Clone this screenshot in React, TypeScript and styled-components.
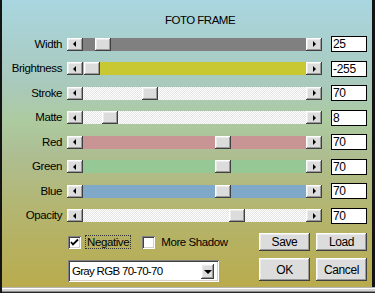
import React from 'react';
import styled, { createGlobalStyle } from 'styled-components';

const FONT = '"Liberation Sans", Arial, sans-serif';

const Global = createGlobalStyle`
  html, body { margin: 0; padding: 0; background: #fff; }
  body { font-family: ${FONT}; letter-spacing: -0.4px; }
  * { box-sizing: border-box; }
`;

const raised = `
  background: #dcdcdc;
  box-shadow: inset -1px -1px #404040, inset 1px 1px #ffffff, inset -2px -2px #9a9a9a, inset 2px 2px #ececec;
`;

const Frame = styled.div`
  width: 375px;
  height: 293px;
  display: flex;
  flex-direction: column;
  background: #141414;
`;

const Panel = styled.div`
  flex: 1;
  margin: 0 3px 0 2px;
  display: flex;
  flex-direction: column;
  background: linear-gradient(180deg, #a9d6e0 0%, #a9c9bb 30%, #accb9f 42%, #aebf95 52%, #b3b672 72%, #b9ab4d 100%);
`;

const BottomEdge = styled.div`
  height: 6px;
  margin-left: 2px;
  background: linear-gradient(180deg, #b4b4b4 0 1px, #ffffff 1px 2px, #d4d4d4 2px 4px, #8a8a8a 4px 5px, #2a2a2a 5px);
`;

const Title = styled.div`
  height: 32px;
  padding: 14px 0 0 26px;
  line-height: 13px;
  font-size: 11.5px;
  letter-spacing: -0.5px;
  text-align: center;
  color: #000;
`;

const Row = styled.div`
  display: grid;
  grid-template-columns: 60px 255px 36px;
  column-gap: 5px;
  align-items: center;
  height: 24.5px;
`;

const Label = styled.div`
  font-size: 11.5px;
  text-align: right;
  color: #000;
  line-height: 13px;
`;

const ScrollBar = styled.div`
  display: flex;
  height: 13px;
`;

const ArrowBtn = styled.div`
  width: 16px;
  height: 13px;
  flex: none;
  display: flex;
  align-items: center;
  justify-content: center;
  ${raised}
`;

const Tri = styled.div<{ $dir: 'left' | 'right' | 'down' }>`
  width: 0;
  height: 0;
  ${(p) =>
    p.$dir === 'left'
      ? 'border-top: 3px solid transparent; border-bottom: 3px solid transparent; border-right: 3px solid #000; margin-right: 2px;'
      : p.$dir === 'right'
      ? 'border-top: 3px solid transparent; border-bottom: 3px solid transparent; border-left: 3px solid #000; margin-left: 1px;'
      : 'border-left: 4px solid transparent; border-right: 4px solid transparent; border-top: 4px solid #000; margin-top: 1px;'}
`;

const Track = styled.div<{ $bg: string }>`
  flex: 1;
  position: relative;
  ${(p) =>
    p.$bg === 'pattern'
      ? `background-color: #ffffff;
         background-image: conic-gradient(#e4e4e4 25%, #ffffff 0 50%, #e4e4e4 0 75%, #ffffff 0);
         background-size: 2px 2px;`
      : `background: ${p.$bg};`}
`;

const Thumb = styled.div<{ $pos: number }>`
  position: absolute;
  top: 0;
  left: ${(p) => p.$pos}px;
  width: 16px;
  height: 13px;
  ${raised}
`;

const ValueBox = styled.input`
  margin-left: 4px;
  width: 36px;
  height: 16px;
  border: 1px solid #000;
  background: #fff;
  font-family: ${FONT};
  font-size: 12px;
  letter-spacing: -0.3px;
  line-height: 14px;
  padding: 0 1px;
  color: #000;
  outline: none;
`;

const Bottom = styled.div`
  display: flex;
  flex-direction: column;
  padding: 5px 5px 0 66px;
  gap: 6px;
`;

const BottomRow = styled.div`
  display: flex;
  justify-content: space-between;
  align-items: center;
`;

const Checks = styled.div`
  display: flex;
  align-items: center;
`;

const CheckItem = styled.div<{ $gapAfter?: number }>`
  display: flex;
  align-items: center;
  margin-right: ${(p) => p.$gapAfter ?? 0}px;
`;

const Box = styled.div`
  width: 13px;
  height: 13px;
  background: #fff;
  box-shadow: inset 1px 1px #808080, inset -1px -1px #ffffff, inset 2px 2px #404040, inset -2px -2px #d4d0c8;
  display: flex;
  align-items: center;
  justify-content: center;
`;

const CheckText = styled.span<{ $focus?: boolean }>`
  font-size: 11.5px;
  line-height: 12px;
  margin-left: 4px;
  padding: 0 1px;
  color: #000;
  border: 1px dotted ${(p) => (p.$focus ? '#333' : 'transparent')};
`;

const Buttons = styled.div`
  display: flex;
  gap: 6px;
`;

const Btn = styled.div<{ $h: number }>`
  width: 51px;
  height: ${(p) => p.$h}px;
  display: flex;
  align-items: center;
  justify-content: center;
  font-size: 12px;
  color: #000;
  ${raised}
`;

const Select = styled.div`
  width: 151px;
  height: 22px;
  margin-top: 3px;
  background: #fff;
  box-shadow: inset 1px 1px #808080, inset -1px -1px #ffffff, inset 2px 2px #404040, inset -2px -2px #d4d0c8;
  display: flex;
  align-items: center;
  padding: 2px 5px 2px 4px;
`;

const SelectText = styled.span`
  flex: 1;
  font-size: 11.5px;
  letter-spacing: -0.7px;
  color: #000;
`;

const SelectBtn = styled(ArrowBtn)`
  width: 13px;
  height: 15px;
`;

type Slider = { label: string; pos: number; bg: string; value: string };

const sliders: Slider[] = [
  { label: 'Width', pos: 12, bg: '#808080', value: '25' },
  { label: 'Brightness', pos: 1, bg: '#c8c832', value: '-255' },
  { label: 'Stroke', pos: 59, bg: 'pattern', value: '70' },
  { label: 'Matte', pos: 19, bg: 'pattern', value: '8' },
  { label: 'Red', pos: 132, bg: '#c99494', value: '70' },
  { label: 'Green', pos: 132, bg: '#96c896', value: '70' },
  { label: 'Blue', pos: 132, bg: '#80a8c8', value: '70' },
  { label: 'Opacity', pos: 146, bg: 'pattern', value: '70' },
];

export default function App() {
  return (
    <>
      <Global />
      <Frame>
        <Panel>
          <Title>FOTO FRAME</Title>
          {sliders.map((s) => (
            <Row key={s.label}>
              <Label>{s.label}</Label>
              <ScrollBar>
                <ArrowBtn>
                  <Tri $dir="left" />
                </ArrowBtn>
                <Track $bg={s.bg}>
                  <Thumb $pos={s.pos} />
                </Track>
                <ArrowBtn>
                  <Tri $dir="right" />
                </ArrowBtn>
              </ScrollBar>
              <ValueBox readOnly value={s.value} />
            </Row>
          ))}
          <Bottom>
            <BottomRow>
              <Checks>
                <CheckItem $gapAfter={11}>
                  <Box>
                    <svg width="9" height="9" viewBox="0 0 9 9">
                      <path d="M1 4 L3 6.5 L8 1.5" stroke="#000" strokeWidth="1.8" fill="none" />
                    </svg>
                  </Box>
                  <CheckText $focus>Negative</CheckText>
                </CheckItem>
                <CheckItem>
                  <Box />
                  <CheckText>More Shadow</CheckText>
                </CheckItem>
              </Checks>
              <Buttons>
                <Btn $h={18}>Save</Btn>
                <Btn $h={18}>Load</Btn>
              </Buttons>
            </BottomRow>
            <BottomRow>
              <Select>
                <SelectText>Gray RGB 70-70-70</SelectText>
                <SelectBtn>
                  <Tri $dir="down" />
                </SelectBtn>
              </Select>
              <Buttons>
                <Btn $h={23}>OK</Btn>
                <Btn $h={23}>Cancel</Btn>
              </Buttons>
            </BottomRow>
          </Bottom>
        </Panel>
        <BottomEdge />
      </Frame>
    </>
  );
}
